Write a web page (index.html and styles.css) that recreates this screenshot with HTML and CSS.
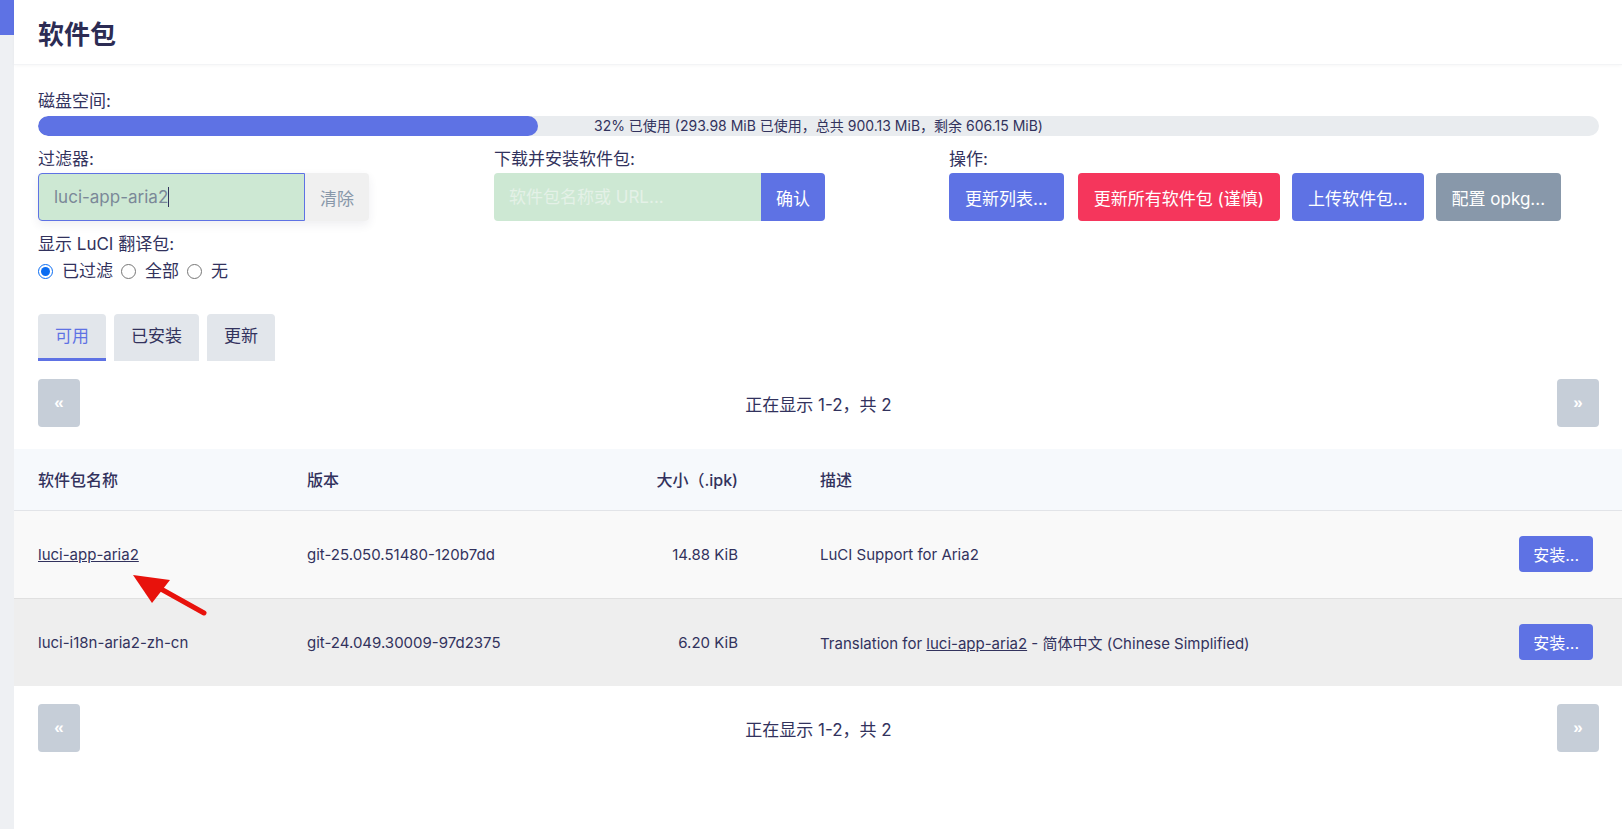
FILE: index.html
```html
<!DOCTYPE html>
<html lang="zh-CN">

<head>
    <meta charset="UTF-8">
    <meta name="viewport" content="width=device-width, initial-scale=1.0">
    <title>软件包</title>
    <link rel="stylesheet" href="styles.css">
</head>

<body>
    <div class="page">
        <div class="rail">
            <div class="rail-top"></div>
        </div>

        <main class="main">
            <header class="head">
                <h2>软件包</h2>
            </header>

            <div class="content">
                <div class="label">磁盘空间:</div>
                <div class="progress">
                    <div class="progress-fill" style="width: 32%"></div>
                    <span class="progress-text">32% 已使用 (293.98 MiB 已使用，总共 900.13 MiB，剩余 606.15 MiB)</span>
                </div>

                <div class="controls">
                    <div class="col">
                        <div class="label">过滤器:</div>
                        <div class="input-group filter-group">
                            <div class="field focused">luci-app-aria2<span class="caret"></span></div>
                            <button class="btn light">清除</button>
                        </div>
                        <div class="label sub">显示 LuCI 翻译包:</div>
                        <div class="radios">
                            <label><input type="radio" name="i18n" checked> 已过滤</label>
                            <label><input type="radio" name="i18n"> 全部</label>
                            <label><input type="radio" name="i18n"> 无</label>
                        </div>
                    </div>
                    <div class="col">
                        <div class="label">下载并安装软件包:</div>
                        <div class="input-group">
                            <input class="field" type="text" placeholder="软件包名称或 URL...">
                            <button class="btn primary">确认</button>
                        </div>
                    </div>
                    <div class="col">
                        <div class="label">操作:</div>
                        <div class="actions">
                            <button class="btn primary">更新列表...</button>
                            <button class="btn danger">更新所有软件包 (谨慎)</button>
                            <button class="btn primary">上传软件包...</button>
                            <button class="btn secondary">配置 opkg...</button>
                        </div>
                    </div>
                </div>

                <ul class="tabs">
                    <li class="active">可用</li>
                    <li>已安装</li>
                    <li>更新</li>
                </ul>

                <div class="pager">
                    <button class="page-btn">&laquo;</button>
                    <span>正在显示 1-2，共 2</span>
                    <button class="page-btn">&raquo;</button>
                </div>

                <table class="pkg-table">
                    <colgroup>
                        <col style="width: 269px">
                        <col style="width: 231px">
                        <col style="width: 248px">
                        <col>
                        <col style="width: 160px">
                    </colgroup>
                    <thead>
                        <tr>
                            <th>软件包名称</th>
                            <th>版本</th>
                            <th class="num">大小（.ipk)</th>
                            <th class="desc">描述</th>
                            <th></th>
                        </tr>
                    </thead>
                    <tbody>
                        <tr>
                            <td><a href="#">luci-app-aria2</a></td>
                            <td>git-25.050.51480-120b7dd</td>
                            <td class="num">14.88 KiB</td>
                            <td class="desc">LuCI Support for Aria2</td>
                            <td class="act"><button class="btn primary small">安装...</button></td>
                        </tr>
                        <tr>
                            <td>luci-i18n-aria2-zh-cn</td>
                            <td>git-24.049.30009-97d2375</td>
                            <td class="num">6.20 KiB</td>
                            <td class="desc">Translation for <a href="#">luci-app-aria2</a> - 简体中文 (Chinese Simplified)</td>
                            <td class="act"><button class="btn primary small">安装...</button></td>
                        </tr>
                    </tbody>
                </table>

                <div class="pager">
                    <button class="page-btn">&laquo;</button>
                    <span>正在显示 1-2，共 2</span>
                    <button class="page-btn">&raquo;</button>
                </div>
            </div>
        </main>
    </div>

    <!-- annotation arrow drawn over the screenshot -->
    <svg class="arrow" width="90" height="50" viewBox="0 0 90 50">
        <line x1="74" y1="42" x2="22" y2="13" stroke="#e8120c" stroke-width="5" stroke-linecap="round" />
        <polygon points="3,4 40,9 22,32" fill="#e8120c" />
    </svg>
</body>

</html>
```

FILE: styles.css
```css
* {
    box-sizing: border-box;
}

body {
    margin: 0;
    font-family: Inter, "Noto Sans CJK SC", sans-serif;
    font-size: 17px;
    color: #32325d;
    background: #fff;
}

.page {
    display: flex;
    min-height: 829px;
}

.rail {
    width: 14px;
    flex-shrink: 0;
    background: #eef0f3;
}

.rail-top {
    height: 35px;
    background: #5e72e4;
}

.main {
    flex: 1;
    min-width: 0;
}

.head {
    height: 65px;
    padding-left: 24px;
    border-bottom: 1px solid #f3f4f6;
    box-shadow: 0 1px 3px rgba(0, 0, 0, 0.03);
    display: flex;
    align-items: center;
}

.head h2 {
    margin: 0;
    font-size: 26px;
    font-weight: 700;
    color: #2c2c54;
}

.content {
    padding: 0 23px 0 24px;
}

.label {
    line-height: 24px;
    margin-top: 24px;
}

.label.sub {
    margin-top: 11px;
}

.progress {
    display: grid;
    margin-top: 3px;
    height: 20px;
    border-radius: 10px;
    background: #e9ecef;
    overflow: hidden;
}

.progress-fill,
.progress-text {
    grid-area: 1 / 1;
}

.progress-fill {
    background: #5e72e4;
    border-radius: 10px;
}

.progress-text {
    font-size: 14px;
    line-height: 20px;
    text-align: center;
    color: #32325d;
}

.controls {
    display: grid;
    grid-template-columns: 456px 455px 1fr;
}

.controls .label {
    margin-top: 11px;
}

.input-group {
    display: flex;
    width: 331px;
    height: 48px;
    margin-top: 2px;
    border-radius: 4px;
}

.filter-group {
    box-shadow: 0 4px 10px rgba(50, 50, 93, 0.08);
}

.field {
    flex: 1;
    min-width: 0;
    border: none;
    outline: none;
    background: #cde8d3;
    border-radius: 4px 0 0 4px;
    padding: 0 15px;
    font: inherit;
    font-size: 17px;
    color: #7b8898;
}

.field::placeholder {
    color: #e4f1e7;
}

.field.focused {
    display: flex;
    align-items: center;
    border: 1px solid #5e72e4;
}

.caret {
    width: 1px;
    height: 20px;
    background: #32325d;
}

.btn {
    border: none;
    font: inherit;
    font-size: 17px;
    color: #fff;
    cursor: pointer;
    border-radius: 4px;
    height: 48px;
    padding: 0 16px;
    white-space: nowrap;
}

.input-group .btn {
    width: 64px;
    padding: 0;
    border-radius: 0 4px 4px 0;
}

.btn.light {
    background: #f0f0f0;
    color: #8898aa;
}

.btn.primary {
    background: #5e72e4;
}

.btn.danger {
    background: #f5365c;
}

.btn.secondary {
    background: #8898aa;
}

.btn.small {
    height: 36px;
    padding: 0 14px;
    font-size: 16px;
}

.actions {
    display: flex;
    gap: 12px;
    margin-top: 2px;
}

.actions .btn:first-child {
    margin-right: 2px;
}

.radios {
    display: flex;
    gap: 8px;
    margin-top: 3px;
    line-height: 24px;
}

.radios label {
    display: flex;
    align-items: center;
}

.radios input {
    width: 15px;
    height: 15px;
    margin: 0 9px 0 0;
    accent-color: #0a6cf2;
}

.tabs {
    display: flex;
    gap: 8px;
    list-style: none;
    margin: 31px 0 0;
    padding: 0;
}

.tabs li {
    height: 47px;
    line-height: 44px;
    padding: 0 17px;
    background: #e2e6eb;
    border-radius: 4px 4px 0 0;
    border-bottom: 3px solid transparent;
}

.tabs li.active {
    color: #5e72e4;
    border-bottom-color: #5e72e4;
}

.pager {
    display: flex;
    justify-content: space-between;
    align-items: center;
    margin-top: 18px;
}

.page-btn {
    width: 42px;
    height: 48px;
    border: none;
    border-radius: 4px;
    background: #c6ced8;
    color: #fff;
    font-size: 17px;
    font-weight: 700;
}

.pkg-table {
    width: calc(100% + 47px);
    margin: 22px -23px 0 -24px;
    border-collapse: collapse;
    table-layout: fixed;
    font-size: 16px;
}

.pkg-table th,
.pkg-table td {
    padding: 0 24px;
    text-align: left;
    white-space: nowrap;
}

.pkg-table th {
    height: 61px;
    font-weight: 500;
    background: #f6f9fc;
    border-bottom: 1px solid #e2e4e8;
}

.pkg-table td {
    height: 88px;
    font-size: 15px;
    border-bottom: 1px solid #e0e0e0;
}

.pkg-table tbody tr:nth-child(1) td {
    background: #f9f9f9;
}

.pkg-table tbody tr:nth-child(2) td {
    background: #eeeeee;
    border-bottom: none;
}

.pkg-table .num {
    text-align: right;
}

.pkg-table .desc {
    padding-left: 58px;
}

.pkg-table .act {
    text-align: right;
    padding-right: 29px;
}

.pkg-table a {
    color: #32325d;
}

.arrow {
    position: absolute;
    left: 130px;
    top: 571px;
}
```
